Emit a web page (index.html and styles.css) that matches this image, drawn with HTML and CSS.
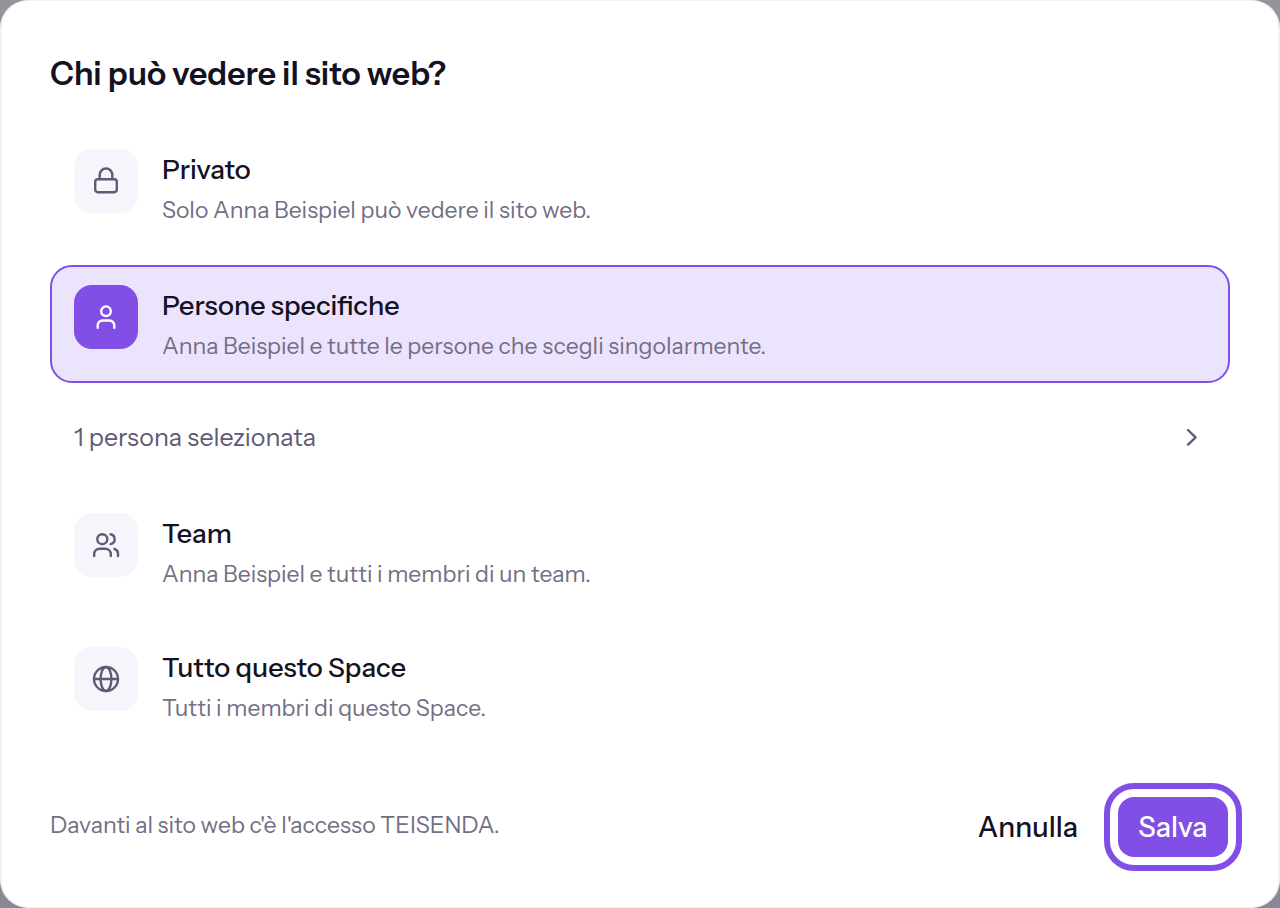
FILE: index.html
```html
<!DOCTYPE html>
<html lang="it">
<head>
<meta charset="utf-8">
<meta name="viewport" content="width=device-width, initial-scale=1">
<title>Chi può vedere il sito web?</title>
<link rel="stylesheet" href="styles.css">
</head>
<body>
<form class="dialog" role="dialog" aria-labelledby="dialog-title">
  <h1 class="title" id="dialog-title">Chi può vedere il sito web?</h1>
  <div class="options" role="radiogroup" aria-labelledby="dialog-title">
    <div class="group personal">
      <label class="option">
        <input class="radio" type="radio" name="access" value="private">
        <span class="tile"><svg class="icon" viewBox="0 0 32 32"><rect x="5.2" y="14.2" width="21.6" height="13" rx="2.6"/><path d="M9.7 14V9.8a6.3 6.3 0 0 1 12.6 0V14"/></svg></span>
        <span class="copy"><span class="name">Privato</span><span class="hint">Solo Anna Beispiel può vedere il sito web.</span></span>
      </label>
      <label class="option">
        <input class="radio" type="radio" name="access" value="people" checked>
        <span class="tile"><svg class="icon" viewBox="0 0 32 32"><circle cx="16" cy="10.2" r="4.8"/><path d="M7.7 26.800V24.500a5 5 0 0 1 5-5h6.600a5 5 0 0 1 5 5v2.300"/></svg></span>
        <span class="copy"><span class="name">Persone specifiche</span><span class="hint">Anna Beispiel e tutte le persone che scegli singolarmente.</span></span>
      </label>
      <button class="selection" type="button">
        <span>1 persona selezionata</span>
        <svg class="icon" viewBox="0 0 32 32"><path d="M12 9l7.600 7.300L12 23.600"/></svg>
      </button>
    </div>
    <div class="group">
      <label class="option">
        <input class="radio" type="radio" name="access" value="team">
        <span class="tile"><svg class="icon" viewBox="0 0 32 32"><circle cx="12.3" cy="10.2" r="5"/><path d="M4.2 27V25a5.300 5.300 0 0 1 5.300-5.300h6a5.300 5.300 0 0 1 5.300 5.300v2M20.600 5.300a5 5 0 0 1 0 9.800M24.400 19.800a5.300 5.300 0 0 1 3.600 5v2.200"/></svg></span>
        <span class="copy"><span class="name">Team</span><span class="hint">Anna Beispiel e tutti i membri di un team.</span></span>
      </label>
      <label class="option">
        <input class="radio" type="radio" name="access" value="space">
        <span class="tile"><svg class="icon" viewBox="0 0 32 32"><circle cx="16" cy="16" r="12"/><ellipse cx="16" cy="16" rx="5.4" ry="12"/><path d="M4 16h24"/></svg></span>
        <span class="copy"><span class="name">Tutto questo Space</span><span class="hint">Tutti i membri di questo Space.</span></span>
      </label>
    </div>
  </div>
  <footer class="footer">
    <p class="note">Davanti al sito web c'è l'accesso TEISENDA.</p>
    <button class="button" type="button">Annulla</button>
    <button class="button primary" type="submit">Salva</button>
  </footer>
</form>
</body>
</html>
```
FILE: styles.css
```css
* {
  box-sizing: border-box;
}

body {
  margin: 0;
  min-height: 100vh;
  display: flex;
  background: linear-gradient(#949499, #8b8795);
  font-family: "Instrument Sans", Inter, "Liberation Sans", sans-serif;
  color: #141122;
}

.dialog {
  flex: 1;
  display: flex;
  flex-direction: column;
  padding: 48px 48px 50px;
  background: #fff;
  border: solid #f1f1f2;
  border-width: 1px 2px;
  border-radius: 28px;
}

.title {
  margin: 0 0 30px;
  font-size: 32px;
  line-height: 50px;
  font-weight: 600;
}

.options {
  display: flex;
  flex-direction: column;
  gap: 20px;
}

.group {
  display: flex;
  flex-direction: column;
  gap: 16px;
}

.personal {
  gap: 18px;
}

.option {
  display: flex;
  gap: 24px;
  padding: 18px 22px 16px;
  border: 2px solid transparent;
  border-radius: 22px;
  cursor: pointer;
}

.option:has(.radio:checked) {
  background: #ece4fc;
  border-color: #814ee6;
}

.radio {
  position: absolute;
  opacity: 0;
  pointer-events: none;
}

.tile {
  flex: none;
  display: grid;
  place-items: center;
  width: 64px;
  height: 64px;
  border-radius: 18px;
  background: #f6f5fb;
  color: #5f5a76;
}

.radio:checked + .tile {
  background: #814ee6;
  color: #fff;
}

.icon {
  width: 32px;
  height: 32px;
  fill: none;
  stroke: currentColor;
  stroke-width: 2.4;
  stroke-linecap: round;
  stroke-linejoin: round;
}

.copy {
  display: flex;
  flex-direction: column;
}

.name {
  font-size: 27px;
  line-height: 42px;
  font-weight: 500;
}

.hint,
.note {
  font-size: 23px;
  line-height: 38px;
  color: #736e84;
}

.selection {
  display: flex;
  justify-content: space-between;
  align-items: center;
  min-height: 72px;
  padding: 0 22px 0 24px;
  border: 0;
  background: none;
  font: inherit;
  font-size: 25px;
  color: #5f5a76;
  cursor: pointer;
}

.footer {
  display: flex;
  align-items: center;
  gap: 20px;
  margin-top: auto;
  padding-right: 2px;
}

.note {
  flex: 1;
  margin: 0;
  padding-bottom: 4px;
}

.button {
  height: 60px;
  padding: 0 20px;
  border: 0;
  border-radius: 16px;
  background: none;
  font: inherit;
  font-size: 28px;
  font-weight: 500;
  color: inherit;
  cursor: pointer;
}

.primary {
  min-width: 110px;
  background: #814ee6;
  color: #fff;
  outline: 6px solid #814ee6;
  outline-offset: 8px;
}
```
